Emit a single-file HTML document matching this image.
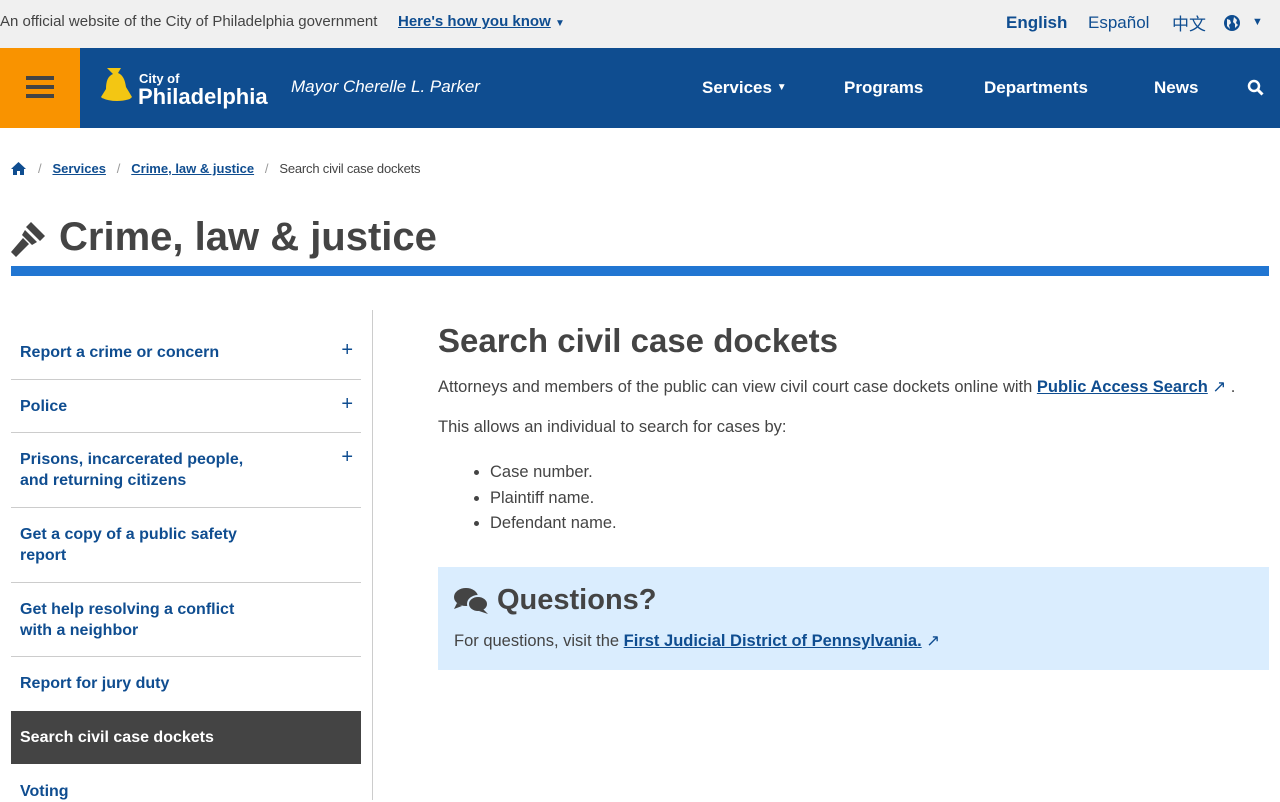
<!DOCTYPE html>
<html><head><meta charset="utf-8"><style>
*{margin:0;padding:0;box-sizing:border-box}
body{width:1280px;height:800px;overflow:hidden;font-family:"Liberation Sans",sans-serif;color:#444;background:#fff;position:relative}
.abs{position:absolute}
a{color:#0f4d90;font-weight:bold}
.top{top:0;left:0;width:1280px;height:48px;background:#f0f0f0}
.hdr{top:48px;left:0;width:1280px;height:80px;background:#0f4d90}
.nav{color:#fff;font-weight:bold;font-size:17px;top:78px}
.item{position:absolute;left:11px;width:350px;color:#0f4d90;font-size:16px;font-weight:bold;padding-left:9px;line-height:21px;border-bottom:1px solid #ccc}
.plus{position:absolute;right:8px;top:0;font-size:20px;font-weight:normal}
</style></head><body>
<div class="abs top"></div>
<div class="abs" style="left:0;top:13px;font-size:15px;color:#444">An official website of the City of Philadelphia government</div>
<div class="abs" style="left:398px;top:13px;font-size:15px;"><a style="text-decoration:underline">Here's how you know</a> <span style="color:#0f4d90;font-size:10px">▼</span></div>
<div class="abs" style="left:1006px;top:13px;font-size:17px;font-weight:bold;color:#0f4d90">English</div>
<div class="abs" style="left:1088px;top:13px;font-size:17px;color:#0f4d90">Español</div>
<div class="abs" style="left:1172px;top:10px;font-size:17px;color:#0f4d90;font-family:'Liberation Sans','Noto Sans CJK SC',sans-serif">中文</div>
<svg class="abs" style="left:1223px;top:14px" width="18" height="18" viewBox="0 0 18 18"><circle cx="9" cy="9" r="8" fill="#0f4d90"/><path d="M4 5l3 1 1 3-2 2 1 4-3-3zM11 3l3 3-1 3 2 2-3 3 0-4-2-2z" fill="#f0f0f0"/></svg>
<div class="abs" style="left:1252px;top:16px;font-size:11px;color:#0f4d90">▼</div>
<div class="abs hdr"></div>
<div class="abs" style="left:0;top:48px;width:80px;height:80px;background:#f99300"></div>
<div class="abs" style="left:26px;top:76px;width:28px;height:4px;background:#444;box-shadow:0 9px 0 #444,0 18px 0 #444"></div>
<svg class="abs" style="left:99px;top:66px" width="36" height="42" viewBox="0 0 36 42"><path d="M8 2h14l-3 5c5 2 7 7 8 14l6 10-4 4H6l-4-4 5-8c0-8 2-13 7-15z" fill="#f3c613"/><path d="M3 33c8 4 22 4 30 0" stroke="#0f4d90" stroke-width="2" fill="none"/></svg>
<div class="abs" style="left:139px;top:71px;color:#fff;font-size:13px;font-weight:bold">City of</div>
<div class="abs" style="left:138px;top:84px;color:#fff;font-size:22px;font-weight:bold">Philadelphia</div>
<div class="abs" style="left:291px;top:77px;color:#fff;font-size:17px;font-style:italic">Mayor Cherelle L. Parker</div>
<div class="abs nav" style="left:702px">Services <span style="font-size:10px;vertical-align:3px">▼</span></div>
<div class="abs nav" style="left:844px">Programs</div>
<div class="abs nav" style="left:984px">Departments</div>
<div class="abs nav" style="left:1154px">News</div>
<svg class="abs" style="left:1247px;top:79px" width="17" height="17" viewBox="0 0 17 17"><circle cx="7" cy="7" r="5" stroke="#fff" stroke-width="2.5" fill="none"/><path d="M10.5 10.5l5 5" stroke="#fff" stroke-width="3"/></svg>
<svg class="abs" style="left:11px;top:162px" width="15" height="13" viewBox="0 0 15 13"><path d="M7.5 0L0 7h2v6h4V9h3v4h4V7h2z" fill="#0f4d90"/></svg>
<div class="abs" style="left:38px;top:161px;font-size:13px;color:#999">/ &nbsp;&nbsp;<a style="text-decoration:underline">Services</a> &nbsp;&nbsp;/&nbsp;&nbsp; <a style="text-decoration:underline">Crime, law &amp; justice</a> &nbsp;&nbsp;/&nbsp;&nbsp; <span style="color:#444;letter-spacing:-0.2px">Search civil case dockets</span></div>
<svg class="abs" style="left:11px;top:220px" width="38" height="38" viewBox="0 0 38 38"><path d="M20 2l14 14-5 5-14-14z M14 10l12 12-5 3-10-10z M12 18l6 6L5 37 0 32z" fill="#444"/></svg>
<div class="abs" style="left:59px;top:215px;font-size:40px;font-weight:bold;color:#444">Crime, law &amp; justice</div>
<div class="abs" style="left:11px;top:266px;width:1258px;height:10px;background:#2176d2"></div>
<div class="abs" style="left:372px;top:310px;width:1px;height:490px;background:#ccc"></div>
<div class="item" style="top:342px;height:38px">Report a crime or concern<span class="plus" style="top:-2px">+</span></div>
<div class="item" style="top:396px;height:37px">Police<span class="plus" style="top:-2px">+</span></div>
<div class="item" style="top:449px;height:59px">Prisons, incarcerated people,<br>and returning citizens<span class="plus" style="top:-2px">+</span></div>
<div class="item" style="top:524px;height:59px">Get a copy of a public safety<br>report</div>
<div class="item" style="top:599px;height:58px">Get help resolving a conflict<br>with a neighbor</div>
<div class="item" style="top:673px;height:38px;border:0">Report for jury duty</div>
<div class="item" style="top:711px;height:53px;background:#444;color:#fff;padding-top:16px;border:0">Search civil case dockets</div>
<div class="item" style="top:781px;border:0">Voting</div>
<div class="abs" style="left:438px;top:322px;font-size:33px;font-weight:bold">Search civil case dockets</div>
<div class="abs" style="left:438px;top:377px;font-size:16.5px">Attorneys and members of the public can view civil court case dockets online with <a style="text-decoration:underline">Public Access Search</a> <span style="color:#0f4d90">↗</span> .</div>
<div class="abs" style="left:438px;top:418px;font-size:16.5px">This allows an individual to search for cases by:</div>
<ul class="abs" style="left:490px;top:460px;font-size:16.5px;line-height:25.5px">
<li>Case number.</li><li>Plaintiff name.</li><li>Defendant name.</li></ul>
<div class="abs" style="left:438px;top:567px;width:831px;height:103px;background:#daedfe"></div>
<svg class="abs" style="left:453px;top:587px" width="36" height="28" viewBox="0 0 36 28"><ellipse cx="13" cy="10" rx="12" ry="9" fill="#444"/><path d="M4 16l-3 6 8-3z" fill="#444"/><ellipse cx="25" cy="17" rx="10" ry="8" fill="#444" stroke="#daedfe" stroke-width="2"/><path d="M30 22l5 5-9-3z" fill="#444"/></svg>
<div class="abs" style="left:497px;top:584px;font-size:29px;font-weight:bold">Questions?</div>
<div class="abs" style="left:454px;top:631px;font-size:16.5px">For questions, visit the <a style="text-decoration:underline">First Judicial District of Pennsylvania.</a> <span style="color:#0f4d90">↗</span></div>
</body></html>
